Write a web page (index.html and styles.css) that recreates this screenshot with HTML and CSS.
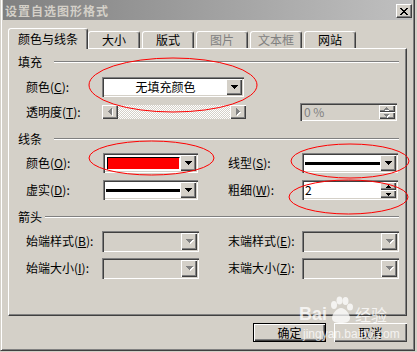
FILE: index.html
```html
<!DOCTYPE html>
<html>
<head>
<meta charset="utf-8">
<link rel="stylesheet" href="styles.css">
</head>
<body>
<div class="window">
  <div class="titlebar">
    <span class="title">设置自选图形格式</span>
    <span class="close"><svg width="8" height="7" viewBox="0 0 8 7"><path d="M0 0h2v1h1v1h2v-1h1v-1h2v1h-1v1h-1v1h-1v1h1v1h1v1h1v1h-2v-1h-1v-1h-2v1h-1v1h-2v-1h1v-1h1v-1h1v-1h-1v-1h-1v-1h-1z"/></svg></span>
  </div>

  <div class="tabs">
    <div class="tab active">颜色与线条</div>
    <div class="tab">大小</div>
    <div class="tab">版式</div>
    <div class="tab disabled">图片</div>
    <div class="tab disabled">文本框</div>
    <div class="tab">网站</div>
  </div>

  <div class="panel">
    <div class="head"><span>填充</span><i class="rule"></i></div>

    <div class="row gap7">
      <span class="lab">颜色(<u>C</u>):</span>
      <div class="combo w142">
        <div class="field center">无填充颜色</div>
        <span class="drop"><svg width="7" height="4" viewBox="0 0 7 4"><path d="M0 0H7V1H6V2H5V3H4V4H3V3H2V2H1V1H0Z"/></svg></span>
      </div>
    </div>

    <div class="row gap3">
      <span class="lab">透明度(<u>T</u>):</span>
      <div class="slider">
        <span class="sbtn"><svg width="5" height="8" viewBox="0 0 5 8"><path fill="#fff" d="M4 1H5V8H4V7H3V6H2V5H3V4H4Z"/><path fill="#808080" d="M3 0H4V7H3V6H2V5H1V4H0V3H1V2H2V1H3Z"/></svg></span>
        <span class="track"></span>
        <span class="sbtn"><svg width="5" height="8" viewBox="0 0 5 8"><path fill="#fff" d="M1 1H2V2H3V3H4V4H5V5H4V6H3V7H2V8H1Z"/><path fill="#808080" d="M0 0H1V1H2V2H3V3H4V4H3V5H2V6H1V7H0Z"/></svg></span>
      </div>
      <div class="spin disabled-spin">
        <div class="field grey">0 %</div>
        <div class="spinbtns">
          <span class="mini"><svg width="6" height="4" viewBox="0 0 6 4"><path fill="#fff" d="M2 1H3V2H4V3H5V4H1V3H2Z"/><path fill="#808080" d="M2 0H3V1H4V2H5V3H0V2H1V1H2Z"/></svg></span>
          <span class="mini"><svg width="6" height="4" viewBox="0 0 6 4"><path fill="#fff" d="M1 1H6V2H5V3H4V4H3V3H2V2H1Z"/><path fill="#808080" d="M0 0H5V1H4V2H3V3H2V2H1V1H0Z"/></svg></span>
        </div>
      </div>
    </div>

    <div class="head gap9"><span>线条</span><i class="rule"></i></div>

    <div class="row gap6">
      <span class="lab">颜色(<u>O</u>):</span>
      <div class="combo w95 shift1">
        <div class="field"><span class="swatch"></span></div>
        <span class="drop"><svg width="7" height="4" viewBox="0 0 7 4"><path d="M0 0H7V1H6V2H5V3H4V4H3V3H2V2H1V1H0Z"/></svg></span>
      </div>
      <span class="lab2 m30">线型(<u>S</u>):</span>
      <div class="combo w96">
        <div class="field"><span class="linesample"></span></div>
        <span class="drop"><svg width="7" height="4" viewBox="0 0 7 4"><path d="M0 0H7V1H6V2H5V3H4V4H3V3H2V2H1V1H0Z"/></svg></span>
      </div>
    </div>

    <div class="row gap5">
      <span class="lab">虚实(<u>D</u>):</span>
      <div class="combo w95 shift1">
        <div class="field"><span class="linesample"></span></div>
        <span class="drop"><svg width="7" height="4" viewBox="0 0 7 4"><path d="M0 0H7V1H6V2H5V3H4V4H3V3H2V2H1V1H0Z"/></svg></span>
      </div>
      <span class="lab2 m30">粗细(<u>W</u>):</span>
      <div class="spin w96">
        <div class="field">2</div>
        <div class="spinbtns">
          <span class="mini"><svg width="5" height="3" viewBox="0 0 5 3"><path d="M2 0H3V1H4V2H5V3H0V2H1V1H2Z"/></svg></span>
          <span class="mini"><svg width="5" height="3" viewBox="0 0 5 3"><path d="M0 0H5V1H4V2H3V3H2V2H1V1H0Z"/></svg></span>
        </div>
      </div>
    </div>

    <div class="head arrowhead gap9"><span>箭头</span><i class="rule"></i></div>

    <div class="row tall gap6">
      <span class="lab">始端样式(<u>B</u>):</span>
      <div class="combo off w97">
        <div class="field"></div>
        <span class="drop"><svg width="8" height="5" viewBox="0 0 8 5"><path fill="#fff" d="M1 1H8V2H7V3H6V4H5V5H4V4H3V3H2V2H1Z"/><path fill="#808080" d="M0 0H7V1H6V2H5V3H4V4H3V3H2V2H1V1H0Z"/></svg></span>
      </div>
      <span class="lab2 m29">末端样式(<u>E</u>):</span>
      <div class="combo off w97">
        <div class="field"></div>
        <span class="drop"><svg width="8" height="5" viewBox="0 0 8 5"><path fill="#fff" d="M1 1H8V2H7V3H6V4H5V5H4V4H3V3H2V2H1Z"/><path fill="#808080" d="M0 0H7V1H6V2H5V3H4V4H3V3H2V2H1V1H0Z"/></svg></span>
      </div>
    </div>

    <div class="row tall gap5">
      <span class="lab">始端大小(<u>I</u>):</span>
      <div class="combo off w97">
        <div class="field"></div>
        <span class="drop"><svg width="8" height="5" viewBox="0 0 8 5"><path fill="#fff" d="M1 1H8V2H7V3H6V4H5V5H4V4H3V3H2V2H1Z"/><path fill="#808080" d="M0 0H7V1H6V2H5V3H4V4H3V3H2V2H1V1H0Z"/></svg></span>
      </div>
      <span class="lab2 m29">末端大小(<u>Z</u>):</span>
      <div class="combo off w97">
        <div class="field"></div>
        <span class="drop"><svg width="8" height="5" viewBox="0 0 8 5"><path fill="#fff" d="M1 1H8V2H7V3H6V4H5V5H4V4H3V3H2V2H1Z"/><path fill="#808080" d="M0 0H7V1H6V2H5V3H4V4H3V3H2V2H1V1H0Z"/></svg></span>
      </div>
    </div>
  </div>

  <div class="buttons">
    <span class="btn default">确定</span>
    <span class="btn">取消</span>
  </div>

  <div class="watermark">
    <div class="wm-top"><span class="wm-bai">Bai</span><svg class="wm-paw" width="28" height="28" viewBox="0 0 28 28"><ellipse cx="7" cy="9" rx="3" ry="4"/><ellipse cx="12.5" cy="4.5" rx="3" ry="4"/><ellipse cx="18.5" cy="5" rx="3" ry="4"/><ellipse cx="23" cy="11" rx="3" ry="3.5"/><path d="M14 12c-4 0-9 6-9 10 0 4 4 5 9 5s9-1 9-5c0-4-5-10-9-10z"/></svg><span class="wm-jy">经验</span></div>
    <div class="wm-url">jingyan.baidu.com</div>
  </div>

  <svg class="marks" width="417" height="352" viewBox="0 0 417 352">
    <ellipse cx="173" cy="85" rx="84" ry="27"/>
    <ellipse cx="151.5" cy="158" rx="62.5" ry="17"/>
    <ellipse cx="350" cy="161" rx="59" ry="17"/>
    <ellipse cx="348.5" cy="197" rx="59.5" ry="17"/>
  </svg>
</div>
</body>
</html>
```

FILE: styles.css
```css
* { box-sizing: border-box; }
html, body { margin: 0; padding: 0; }
body {
  width: 417px;
  height: 352px;
  overflow: hidden;
  background: #d4d0c8;
  color: #000;
  font-family: "Noto Sans CJK SC", "Liberation Sans", sans-serif;
  font-size: 12px;
  line-height: 14px;
}
u { text-decoration: underline; text-underline-offset: 1px; }

.window {
  position: relative;
  width: 415px;
  height: 351px;
  background: #d4d0c8;
  border-left: 1px solid #d4d0c8;
  border-right: 1px solid #404040;
  border-bottom: 1px solid #404040;
  box-shadow: inset 1px 0 #fff, inset -1px -1px #808080;
  padding: 0 2px;
}

/* title bar */
.titlebar {
  height: 20px;
  display: flex;
  justify-content: space-between;
  align-items: flex-start;
  padding-left: 2px;
  background: linear-gradient(to right, #808080, #c0c0c0);
}
.title {
  color: #d4d0c8;
  font-weight: bold;
  letter-spacing: 1px;
  line-height: 14px;
  margin-top: 4px;
}
.close {
  width: 16px;
  height: 14px;
  margin-top: 4px;
  background: #d4d0c8;
  border: 1px solid;
  border-color: #fff #404040 #404040 #fff;
  box-shadow: inset -1px -1px #808080;
  display: flex;
  align-items: center;
  justify-content: center;
}

/* tabs */
.tabs {
  position: relative;
  z-index: 1;
  display: flex;
  align-items: flex-end;
  height: 20px;
  margin-top: 8px;
  padding-left: 5px;
}
.tab {
  width: 52px;
  height: 17px;
  margin-right: 2px;
  background: #d4d0c8;
  border: 1px solid;
  border-bottom: none;
  border-color: #fff #404040 transparent #fff;
  border-radius: 3px 3px 0 0;
  box-shadow: inset -1px 0 #808080;
  text-align: center;
  line-height: 16px;
}
.tab.active {
  width: 80px;
  height: 21px;
  margin-right: 0;
  margin-bottom: -1px;
  line-height: 19px;
}
.tab.disabled { color: #808080; }

/* panel */
.panel {
  width: 399px;
  height: 268px;
  margin-left: 5px;
  border: 1px solid;
  border-color: #fff #404040 #404040 #fff;
  box-shadow: inset -1px -1px #808080;
  padding-top: 6px;
}
.head {
  display: flex;
  align-items: center;
  height: 14px;
  padding: 0 7px 0 9px;
}
.rule {
  flex: 1;
  height: 2px;
  border-top: 1px solid #808080;
  border-bottom: 1px solid #fff;
  margin-left: 12px;
}
.arrowhead .rule { margin-left: 3px; }

.row {
  display: flex;
  align-items: center;
  height: 22px;
  padding-left: 17px;
}
.row.tall { height: 22px; }
.gap3 { margin-top: 3px; }
.gap5 { margin-top: 5px; }
.gap6 { margin-top: 6px; }
.gap7 { margin-top: 7px; }
.gap9 { margin-top: 9px; }

.lab { width: 76px; white-space: nowrap; }
.lab2 { width: 74px; white-space: nowrap; }
.m29 { margin-left: 29px; }
.m30 { margin-left: 30px; }

/* sunken controls */
.combo, .spin {
  display: flex;
  height: 20px;
  padding: 2px;
  background: #fff;
  border: 0;
  box-shadow: inset 1px 1px #808080, inset 2px 2px #404040, inset -1px -1px #fff, inset -2px -2px #d4d0c8;
}
.combo.off { height: 21px; background: #d4d0c8; }
.w142 { width: 142px; }
.w95 { width: 95px; }
.w96 { width: 96px; }
.w97 { width: 97px; }
.shift1 { margin-left: 1px; }

.field {
  flex: 1;
  display: flex;
  align-items: center;
  padding-left: 1px;
  min-width: 0;
}
.field.center { justify-content: center; }
.field.grey { color: #808080; padding-left: 2px; }

.drop, .sbtn, .mini, .btn {
  background: #d4d0c8;
  box-shadow: inset 1px 1px #fff, inset -1px -1px #404040, inset -2px -2px #808080;
  display: flex;
  align-items: center;
  justify-content: center;
}
.drop { width: 16px; }
.combo.off .drop svg { margin-left: 1px; margin-top: 1px; }

.swatch {
  display: block;
  width: 74px;
  height: 13px;
  margin-left: 1px;
  background: #f00;
  border: 1px solid #000;
  border-color: #000 #fff #fff #000;
}
.linesample {
  display: block;
  width: 100%;
  height: 3px;
  background: #000;
}

/* slider */
.slider {
  display: flex;
  width: 144px;
  height: 14px;
}
.sbtn { width: 16px; height: 14px; }
.track {
  flex: 1;
  background: repeating-conic-gradient(#fff 0 25%, #d4d0c8 0 50%) 0 0 / 2px 2px;
}

/* spin boxes */
.disabled-spin {
  width: 97px;
  height: 18px;
  margin-left: 54px;
  background: #d4d0c8;
}
.spinbtns {
  display: flex;
  flex-direction: column;
  width: 16px;
}
.mini { flex: 1; }

/* buttons */
.buttons {
  display: flex;
  justify-content: flex-end;
  gap: 8px;
  margin-top: 7px;
  padding-right: 5px;
}
.btn {
  width: 73px;
  height: 19px;
  line-height: 14px;
  box-shadow: inset 1px 1px #fff, inset -1px -1px #404040, inset -2px -2px #808080;
}
.btn.default {
  border: 1px solid #000;
}

/* watermark */
.watermark {
  position: absolute;
  left: 298px;
  top: 296px;
  color: rgba(255, 255, 255, 0.75);
  pointer-events: none;
}
.wm-top { display: flex; align-items: flex-end; height: 28px; }
.wm-bai {
  font-family: "Liberation Sans", sans-serif;
  font-weight: bold;
  font-size: 18px;
  line-height: 18px;
  margin-bottom: 1px;
}
.wm-paw { fill: rgba(255, 255, 255, 0.75); margin-left: 0; }
.wm-jy { font-size: 16px; line-height: 18px; margin-bottom: 1px; }
.wm-url {
  font-family: "Liberation Sans", sans-serif;
  font-size: 12px;
  line-height: 12px;
  margin-top: 4px;
  margin-left: 4px;
}

/* red annotation ellipses */
.marks {
  position: absolute;
  left: -1px;
  top: 0;
  pointer-events: none;
  fill: none;
  stroke: #f00;
  stroke-width: 1;
}
```
